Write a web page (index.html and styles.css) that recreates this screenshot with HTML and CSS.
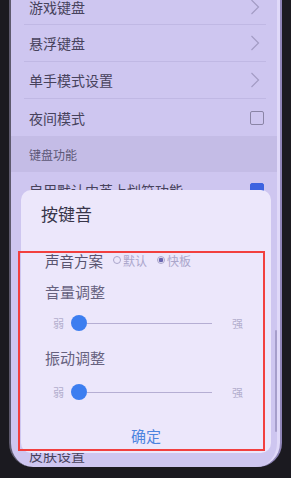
FILE: index.html
```html
<!DOCTYPE html>
<html lang="zh-CN">
<head>
<meta charset="utf-8">
<link rel="stylesheet" href="styles.css">
</head>
<body>
<div class="device">
  <div class="screen">
    <div class="list">
      <div class="row"><span>游戏键盘</span><svg class="chev" width="14" height="16" viewBox="0 0 14 16"><polyline points="1.5,1 8.5,8 1.5,15" /></svg></div>
      <div class="row"><span>悬浮键盘</span><svg class="chev" width="14" height="16" viewBox="0 0 14 16"><polyline points="1.5,1 8.5,8 1.5,15" /></svg></div>
      <div class="row"><span>单手模式设置</span><svg class="chev" width="14" height="16" viewBox="0 0 14 16"><polyline points="1.5,1 8.5,8 1.5,15" /></svg></div>
      <div class="row last"><span>夜间模式</span><span class="check"></span></div>
      <div class="section">键盘功能</div>
      <div class="row"><span>启用默认中英上划符功能</span><span class="check on"></span></div>
      <div class="row"></div>
      <div class="row"></div>
      <div class="row"></div>
      <div class="row"></div>
      <div class="row"></div>
      <div class="row"></div>
      <div class="row tail"><span>皮肤设置</span></div>
    </div>
    <div class="scroll"></div>
    <div class="dialog">
      <div class="title">按键音</div>
      <div class="body">
        <div class="scheme">
          <span class="label">声音方案</span>
          <span class="radio"><i></i>默认</span>
          <span class="radio on"><i></i>快板</span>
        </div>
        <div class="heading">音量调整</div>
        <div class="slider">
          <span class="end">弱</span>
          <span class="track"><span class="thumb"></span><span class="line"></span></span>
          <span class="end strong">强</span>
        </div>
        <div class="heading second">振动调整</div>
        <div class="slider second">
          <span class="end">弱</span>
          <span class="track"><span class="thumb"></span><span class="line"></span></span>
          <span class="end strong">强</span>
        </div>
      </div>
      <div class="ok">确定</div>
    </div>
    <div class="annot"></div>
  </div>
</div>
</body>
</html>
```

FILE: styles.css
```css
* { box-sizing: border-box; margin: 0; padding: 0; }
html, body { width: 291px; height: 478px; overflow: hidden; }
body {
  background: #1b1a20;
  font-family: "Noto Sans CJK SC", "Noto Sans", sans-serif;
}
.device { padding-left: 9px; height: 478px; }
.screen {
  position: relative;
  width: 271px;
  height: 467px;
  background: #cec6f0;
  border-left: 2px solid #5e5a6e;
  border-right: 3px solid #e0d9f9;
  box-shadow: 2px 0 0 #8e84b6;
  border-radius: 0 0 24px 24px;
  overflow: hidden;
}
.list { margin-top: -10px; }
.row {
  display: flex;
  align-items: center;
  justify-content: space-between;
  height: 37px;
  margin: 0 11px 0 13px;
  padding: 0 2px 0 5px;
  border-bottom: 1px solid #c0b8e4;
  font-size: 14px;
  line-height: 20px;
  color: #47425c;
}
.row:first-child { height: 35px; }
.row.last { border-bottom: none; }
.row.tail { margin-top: 6px; }
.chev polyline { fill: none; stroke: #a39cc4; stroke-width: 1.2; }
.check {
  width: 14px;
  height: 14px;
  border: 1.5px solid #8a84a6;
  border-radius: 2px;
}
.check.on { background: #3d63e0; border-color: #3d63e0; }
.section {
  height: 36px;
  background: #c4bce6;
  padding-left: 18px;
  display: flex;
  align-items: center;
  font-size: 12px;
  color: #5d5876;
}
.scroll {
  position: absolute;
  left: 264px;
  top: 330px;
  width: 2px;
  height: 102px;
  background: #a69ecb;
  border-radius: 1px;
}
.dialog {
  position: absolute;
  left: 10px;
  top: 190px;
  width: 250px;
  height: 263px;
  background: #ece7fb;
  border-radius: 10px;
}
.title {
  height: 48px;
  padding: 12px 0 0 20px;
  font-size: 17px;
  line-height: 24px;
  color: #38364a;
}
.body { padding-left: 24px; }
.scheme {
  margin-top: 10px;
  height: 24px;
  display: flex;
  align-items: center;
}
.label { font-size: 14.5px; color: #59546f; }
.radio {
  display: flex;
  align-items: center;
  gap: 2px;
  margin-left: 10px;
  font-size: 12px;
  color: #aba6cb;
}
.radio i {
  display: block;
  width: 8px;
  height: 8px;
  border: 1px solid #aba6cb;
  border-radius: 50%;
}
.radio.on i { background: radial-gradient(circle, #6a66b0 0 2px, transparent 2.6px); }
.heading {
  margin-top: 8px;
  height: 24px;
  font-size: 15px;
  line-height: 24px;
  color: #67627f;
}
.heading.second { margin-top: 13px; }
.slider {
  margin-top: 9px;
  height: 20px;
  padding-left: 8px;
  display: flex;
  align-items: center;
}
.slider.second { margin-top: 12px; }
.end { width: 11px; font-size: 11px; line-height: 14px; color: #b3aecd; }
.end.strong { margin-left: 20px; }
.track {
  margin-left: 7px;
  width: 141px;
  display: flex;
  align-items: center;
}
.thumb {
  width: 16px;
  height: 16px;
  border-radius: 50%;
  background: #3c7ef0;
}
.line { flex: 1; height: 1px; background: #b5aed3; }
.ok {
  margin-top: 19px;
  height: 30px;
  line-height: 30px;
  text-align: center;
  font-size: 15px;
  color: #4d84df;
}
.annot {
  position: absolute;
  left: 7px;
  top: 251px;
  width: 247px;
  height: 200px;
  border: 2px solid #f2403f;
}
```
